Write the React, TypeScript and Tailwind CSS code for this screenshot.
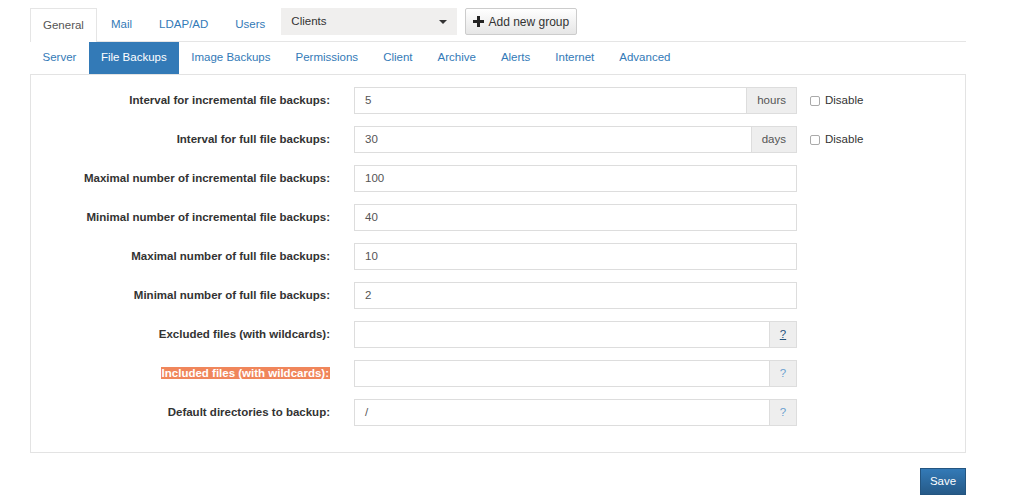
import React from "react";

const rows = [
  { label: "Interval for incremental file backups:", value: "5", addon: "hours", disable: true },
  { label: "Interval for full file backups:", value: "30", addon: "days", disable: true },
  { label: "Maximal number of incremental file backups:", value: "100" },
  { label: "Minimal number of incremental file backups:", value: "40" },
  { label: "Maximal number of full file backups:", value: "10" },
  { label: "Minimal number of full file backups:", value: "2" },
  { label: "Excluded files (with wildcards):", value: "", addon: "?", help: true, underline: true },
  { label: "Included files (with wildcards):", value: "", addon: "?", help: true, highlight: true },
  { label: "Default directories to backup:", value: "/", addon: "?", help: true },
];

const subTabs = ["Server", "File Backups", "Image Backups", "Permissions", "Client", "Archive", "Alerts", "Internet", "Advanced"];

export default function App() {
  return (
    <div className="w-[1024px] h-[504px] bg-white text-[11.5px] text-[#333] font-['Liberation_Sans',Arial,sans-serif]">
      <div className="pl-[30px] pt-[8px] w-[966px]">
        {/* top tabs */}
        <div className="flex items-start h-[34px] border-b border-[#e5e5e5]">
          <div className="w-[67px] h-[34px] pl-[12px] flex items-center border border-b-0 border-[#e5e5e5] bg-white text-[#555] text-[11.5px]">
            General
          </div>
          <div className="h-[33px] flex items-center text-[#337ab7] text-[11.5px]">
            <span className="ml-[14px]">Mail</span>
            <span className="ml-[27px]">LDAP/AD</span>
            <span className="ml-[27px]">Users</span>
          </div>
          <div className="ml-[16px] w-[176px] h-[27px] bg-[#f0efee] flex items-center justify-between pl-[10px] pr-[10px] text-[11.5px]">
            <span>Clients</span>
            <span className="w-0 h-0 border-l-[4px] border-r-[4px] border-t-[4px] border-l-transparent border-r-transparent border-t-[#333]" />
          </div>
          <div className="ml-[8px] w-[112px] h-[27px] border border-[#ccc] rounded-[2px] bg-gradient-to-b from-white to-[#e6e6e6] flex items-center justify-center gap-[4px] text-[12px]">
            <svg width="11" height="11" viewBox="0 0 11 11">
              <rect x="4" y="0" width="3" height="11" fill="#222" />
              <rect x="0" y="4" width="11" height="3" fill="#222" />
            </svg>
            <span>Add new group</span>
          </div>
        </div>
        {/* sub tabs */}
        <div className="flex h-[32px] text-[11.5px] text-[#337ab7]">
          {subTabs.map((t) =>
            t === "File Backups" ? (
              <div key={t} className="h-[32px] px-[12px] flex items-center bg-[#337ab7] text-white">
                {t}
              </div>
            ) : (
              <div key={t} className="h-[32px] px-[12.5px] flex items-center">
                {t}
              </div>
            )
          )}
        </div>
        {/* panel */}
        <div className="border border-[#e3e3e3] h-[379px] pt-[12px]">
          <div className="flex flex-col gap-[12px]">
            {rows.map((r) => (
              <div key={r.label} className="flex items-center h-[27px]">
                <div className="w-[299px] text-right font-bold text-[11.5px]">
                  <span className={r.highlight ? "bg-[#f0865b] text-white px-[1px]" : ""}>{r.label}</span>
                </div>
                <div className="ml-[24px] w-[443px] h-[27px] flex border border-[#ddd]">
                  <div className="flex-1 flex items-center pl-[10px] text-[11.5px] text-[#555]">{r.value}</div>
                  {r.addon && (
                    <div
                      className={
                        "h-full flex items-center justify-center bg-[#eee] border-l border-[#ddd] text-[11.5px] " +
                        (r.help ? "w-[27px] text-[#6a9fd0] " : "px-[10px] text-[#555] ") +
                        (r.underline ? "underline text-[#23527c]" : "")
                      }
                    >
                      {r.addon}
                    </div>
                  )}
                </div>
                {r.disable && (
                  <div className="ml-[13px] flex items-center gap-[5px] text-[11.5px]">
                    <span className="w-[10px] h-[10px] border border-[#aaa] rounded-[2px] bg-white" />
                    <span>Disable</span>
                  </div>
                )}
              </div>
            ))}
          </div>
        </div>
        <div className="flex justify-end mt-[15px]">
          <div className="w-[46px] h-[27px] bg-gradient-to-b from-[#337ab7] to-[#265a88] border border-[#245580] text-white flex items-center justify-center text-[11.5px]">
            Save
          </div>
        </div>
      </div>
    </div>
  );
}
